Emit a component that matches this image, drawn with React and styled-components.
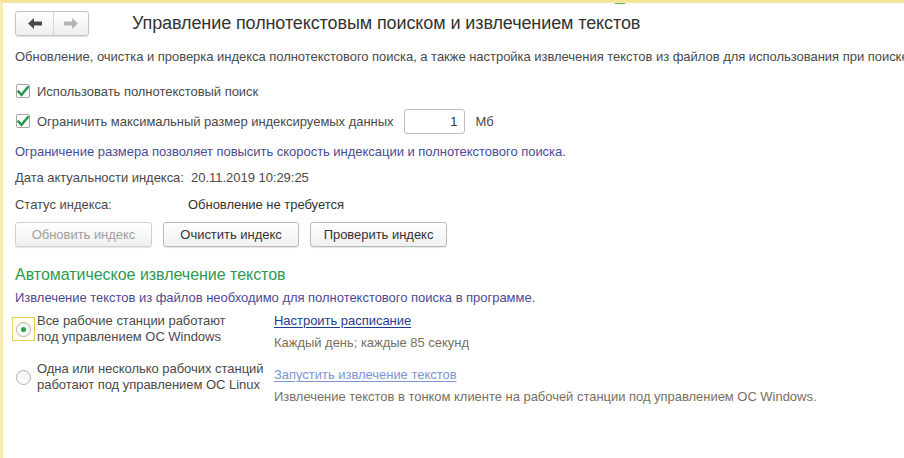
import React from "react";
import styled, { createGlobalStyle } from "styled-components";

const Global = createGlobalStyle`
  html, body { margin: 0; padding: 0; background: #fff; }
  body { font-family: Arial, "Liberation Sans", sans-serif; font-size: 13px; color: #4a4a4a; letter-spacing: -0.03px; }
`;

const Frame = styled.div`
  position: relative;
  box-sizing: border-box;
  width: 904px;
  height: 458px;
  overflow: hidden;
  border-top: 3px solid #f3e59a;
  border-left: 3px solid #f6ebb4;
  background: #fff;
`;

const TopMark = styled.span`
  position: absolute;
  top: -3px;
  left: 610px;
  width: 14px;
  height: 4px;
  border-radius: 0 0 7px 7px;
  background: #5cb85c;
`;

const Header = styled.div`
  display: flex;
  align-items: center;
  height: 41px;
  padding-left: 12px;
`;

const NavGroup = styled.div`
  display: flex;
  height: 23px;
  border: 1px solid #c4c4c4;
  border-radius: 3px;
  background: linear-gradient(#ffffff, #eeeeee);
  box-shadow: 0 1px 1px rgba(0,0,0,0.12);
`;

const NavBtn = styled.div`
  display: flex;
  align-items: center;
  justify-content: center;
  width: ${(p) => p.$w}px;
  border-left: ${(p) => (p.$divider ? "1px solid #d6d6d6" : "none")};
`;

const Title = styled.h1`
  margin: 0 0 0 43px;
  font-weight: normal;
  font-size: 18px;
  letter-spacing: -0.1px;
  color: #333;
  white-space: nowrap;
`;

const Content = styled.div`
  display: flex;
  flex-direction: column;
  padding-left: 12px;
`;

const Line = styled.div`
  display: flex;
  align-items: center;
  height: ${(p) => p.$h || 24}px;
  margin-top: ${(p) => p.$mt || 0}px;
  white-space: nowrap;
  color: ${(p) => p.$color || "#4a4a4a"};
  font-size: ${(p) => p.$size || 13}px;
`;

const CheckBox = styled.span`
  box-sizing: border-box;
  display: inline-flex;
  align-items: center;
  justify-content: center;
  width: 14px;
  height: 14px;
  margin-left: 1px;
  margin-right: 7px;
  border: 1px solid #a6a6a6;
  border-radius: 2px;
  background: #fff;
`;

const NumInput = styled.div`
  box-sizing: border-box;
  width: 61px;
  height: 25px;
  margin-left: 10px;
  margin-right: 11px;
  padding-right: 6px;
  border: 1px solid #bdbdbd;
  border-radius: 3px;
  display: flex;
  align-items: center;
  justify-content: flex-end;
  color: #333;
`;

const Label = styled.span`
  display: inline-block;
  width: ${(p) => p.$w}px;
`;

const Value = styled.span`
  color: #333;
`;

const Buttons = styled.div`
  display: flex;
  gap: 11px;
  margin-top: 6px;
  height: 25px;
`;

const Button = styled.div`
  box-sizing: border-box;
  width: ${(p) => p.$w}px;
  height: 25px;
  display: flex;
  align-items: center;
  justify-content: center;
  border: 1px solid ${(p) => (p.$disabled ? "#d0d0d0" : "#bababa")};
  border-radius: 3px;
  background: linear-gradient(#ffffff, #f0f0f0);
  box-shadow: 0 1px 1px rgba(0,0,0,0.1);
  color: ${(p) => (p.$disabled ? "#a0a0a0" : "#333")};
`;

const Options = styled.div`
  display: grid;
  grid-template-columns: 259px auto;
  align-items: start;
  row-gap: 10px;
  margin-top: 6px;
`;

const RadioItem = styled.div`
  display: flex;
  align-items: center;
  line-height: 16px;
  color: #4a4a4a;
`;

const RadioFocus = styled.span`
  box-sizing: border-box;
  display: inline-flex;
  align-items: center;
  justify-content: center;
  width: 23px;
  height: 24px;
  margin-left: -3px;
  margin-right: 2px;
  border: 1px solid ${(p) => (p.$focus ? "#e5cf5a" : "transparent")};
  background: ${(p) => (p.$focus ? "#fffdf0" : "transparent")};
  flex-shrink: 0;
`;

const Radio = styled.span`
  box-sizing: border-box;
  width: 15px;
  height: 15px;
  border-radius: 50%;
  border: 1px solid #b0b0b0;
  background: linear-gradient(#f4f4f4, #ffffff);
  display: flex;
  align-items: center;
  justify-content: center;
`;

const Dot = styled.span`
  width: 5px;
  height: 5px;
  border-radius: 50%;
  background: #27a04a;
`;

const Side = styled.div`
  display: flex;
  flex-direction: column;
  gap: 6px;
  line-height: 16px;
  margin-top: ${(p) => p.$mt || 0}px;
  white-space: nowrap;
`;

const Link = styled.span`
  color: ${(p) => (p.$light ? "#7b96d2" : "#1f3d8c")};
  text-decoration: underline;
  text-underline-offset: 2px;
`;

const Note = styled.span`
  color: #7b6f60;
`;

const ArrowLeft = ({ color }) => (
  <svg width="14" height="11" viewBox="0 0 14 11">
    <path d="M0 5.5 L6 0 L6 3.5 L14 3.5 L14 7.5 L6 7.5 L6 11 Z" fill={color} />
  </svg>
);
const ArrowRight = ({ color }) => (
  <svg width="14" height="11" viewBox="0 0 14 11">
    <path d="M14 5.5 L8 0 L8 3.5 L0 3.5 L0 7.5 L8 7.5 L8 11 Z" fill={color} />
  </svg>
);

const Check = () => (
  <svg width="12" height="11" viewBox="0 0 12 11">
    <path d="M1.5 5.5 L4.5 8.8 L10.8 1.2" stroke="#23994a" strokeWidth="2.4" fill="none" strokeLinecap="square" />
  </svg>
);

export default function App() {
  return (
    <>
      <Global />
      <Frame>
        <TopMark />
        <Header>
          <NavGroup>
            <NavBtn $w={37}><ArrowLeft color="#4a4a4a" /></NavBtn>
            <NavBtn $w={34} $divider><ArrowRight color="#b4b4b4" /></NavBtn>
          </NavGroup>
          <Title>Управление полнотекстовым поиском и извлечением текстов</Title>
        </Header>
        <Content>
          <Line>Обновление, очистка и проверка индекса полнотекстового поиска, а также настройка извлечения текстов из файлов для использования при поиске</Line>
          <Line $mt={11}><CheckBox><Check /></CheckBox>Использовать полнотекстовый поиск</Line>
          <Line $mt={5} $h={26}>
            <CheckBox><Check /></CheckBox>Ограничить максимальный размер индексируемых данных
            <NumInput>1</NumInput>Мб
          </Line>
          <Line $mt={5} $color="#4b4b93">Ограничение размера позволяет повысить скорость индексации и полнотекстового поиска.</Line>
          <Line $mt={2}>Дата актуальности индекса:&nbsp; 20.11.2019 10:29:25</Line>
          <Line $mt={3}><Label $w={173}>Статус индекса:</Label><Value>Обновление не требуется</Value></Line>
          <Buttons>
            <Button $w={137} $disabled>Обновить индекс</Button>
            <Button $w={136}>Очистить индекс</Button>
            <Button $w={137}>Проверить индекс</Button>
          </Buttons>
          <Line $mt={16} $size={16} $color="#2f9a4f">Автоматическое извлечение текстов</Line>
          <Line $h={20} $color="#4b4b93">Извлечение текстов из файлов необходимо для полнотекстового поиска в программе.</Line>
          <Options>
            <RadioItem>
              <RadioFocus $focus><Radio><Dot /></Radio></RadioFocus>
              <span>Все рабочие станции работают<br />под управлением ОС Windows</span>
            </RadioItem>
            <Side>
              <Link>Настроить расписание</Link>
              <Note>Каждый день; каждые 85 секунд</Note>
            </Side>
            <RadioItem>
              <RadioFocus><Radio /></RadioFocus>
              <span>Одна или несколько рабочих станций<br />работают под управлением ОС Linux</span>
            </RadioItem>
            <Side $mt={6}>
              <Link $light>Запустить извлечение текстов</Link>
              <Note>Извлечение текстов в тонком клиенте на рабочей станции под управлением ОС Windows.</Note>
            </Side>
          </Options>
        </Content>
      </Frame>
    </>
  );
}
